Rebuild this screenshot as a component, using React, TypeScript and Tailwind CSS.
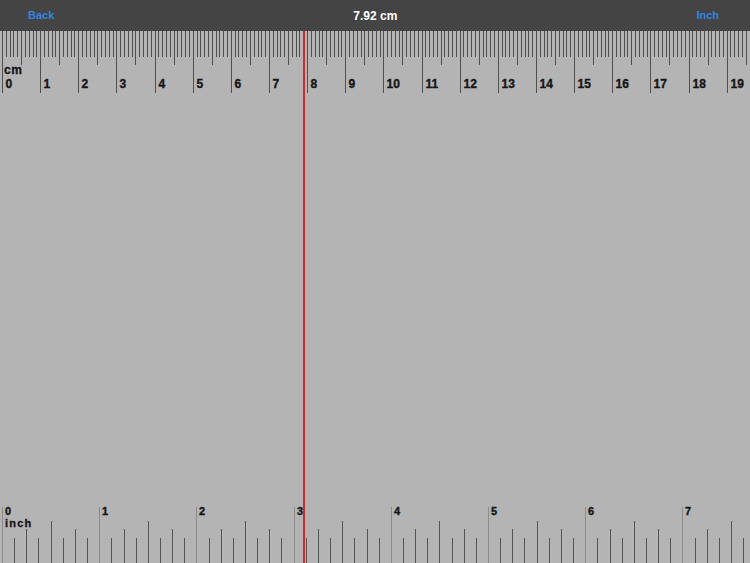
import React from "react";

const CM = 38.14;
const IN = 97.2;

const FONT = "'Liberation Sans', Arial, sans-serif";

function TopRuler() {
  const ticks: React.ReactNode[] = [];
  const labels: React.ReactNode[] = [];
  for (let i = 0; i <= 200; i++) {
    const x = Math.round(2 + (i * CM) / 10) + 0.5;
    if (x > 752) break;
    let len = 26;
    if (i % 10 === 0) len = 62;
    else if (i % 5 === 0) len = 34;
    ticks.push(
      <line key={i} x1={x} x2={x} y1={0} y2={len} stroke="#505050" strokeWidth={1} />
    );
    if (i % 10 === 0) {
      labels.push(
        <text
          key={"l" + i}
          x={x + 3}
          y={57}
          fontFamily={FONT}
          fontWeight={700}
          fontSize={12}
          fill="#151515"
          stroke="#151515"
          strokeWidth={0.35}
        >
          {i / 10}
        </text>
      );
    }
  }
  return (
    <svg width={750} height={64} className="block shrink-0">
      {ticks}
      <text
        x={4}
        y={43}
        fontFamily={FONT}
        fontWeight={700}
        fontSize={12}
        letterSpacing={0.5}
        fill="#151515"
        stroke="#151515"
        strokeWidth={0.3}
      >
        cm
      </text>
      {labels}
    </svg>
  );
}

function BottomRuler() {
  // svg top at y=503
  const ticks: React.ReactNode[] = [];
  const labels: React.ReactNode[] = [];
  for (let j = 0; j <= 80; j++) {
    const x = Math.round(2 + (j * IN) / 8) + 0.5;
    if (x > 752) break;
    let y1 = 35;
    let color = "#555555";
    if (j % 8 === 0) {
      y1 = 4;
      color = "#8c8c8c";
    } else if (j % 4 === 0) y1 = 18;
    else if (j % 2 === 0) y1 = 26;
    ticks.push(
      <line key={j} x1={x} x2={x} y1={y1} y2={60} stroke={color} strokeWidth={1} />
    );
    if (j % 8 === 0) {
      labels.push(
        <text
          key={"l" + j}
          x={x + 2.5}
          y={12}
          fontFamily={FONT}
          fontWeight={700}
          fontSize={11}
          fill="#151515"
          stroke="#151515"
          strokeWidth={0.35}
        >
          {j / 8}
        </text>
      );
    }
  }
  return (
    <svg width={750} height={60} className="block shrink-0">
      {ticks}
      {labels}
      <text
        x={5}
        y={24}
        fontFamily={FONT}
        fontWeight={700}
        fontSize={11}
        letterSpacing={1.2}
        fill="#151515"
        stroke="#151515"
        strokeWidth={0.3}
      >
        inch
      </text>
    </svg>
  );
}

export default function App() {
  return (
    <div className="relative flex h-[563px] w-[750px] flex-col overflow-hidden bg-[#b4b4b4] font-['Liberation_Sans',Arial,sans-serif]">
      <div className="flex h-[31px] shrink-0 items-center justify-between bg-[#444444] pl-[28px] pr-[31px]">
        <span className="text-[11px] font-bold text-[#2f86e0]">Back</span>
        <span className="text-[12px] font-bold text-white">7.92 cm</span>
        <span className="text-[11px] font-bold text-[#2f86e0]">Inch</span>
      </div>
      <TopRuler />
      <div className="flex-1" />
      <BottomRuler />
      <div className="absolute bottom-0 left-[303px] top-[31px] w-[2px] bg-[#d8262a]" />
    </div>
  );
}
